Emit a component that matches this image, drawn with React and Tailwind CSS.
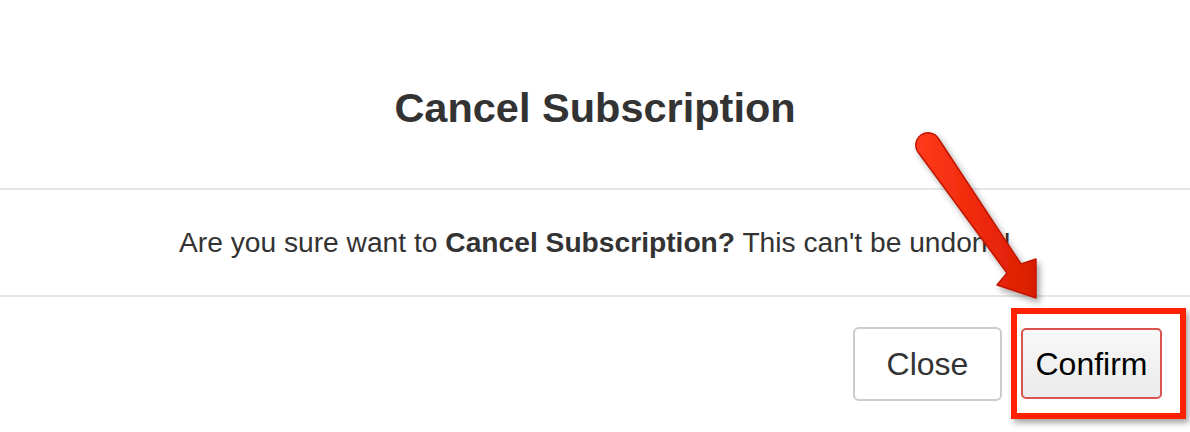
export default function App() {
  return (
    <div className="relative w-[1190px] h-[432px] overflow-hidden bg-white text-[#333] font-['Liberation_Sans',Arial,sans-serif]">
      <div className="h-[188px] pt-[28px] flex items-center justify-center">
        <h2 className="text-[41.5px] font-bold leading-none">Cancel Subscription</h2>
      </div>
      <div className="h-[2px] bg-[#e5e5e5]" />
      <div className="h-[105px] flex items-center justify-center">
        <p className="text-[28.2px] leading-none">
          Are you sure want to <b>Cancel Subscription?</b> This can't be undone!
        </p>
      </div>
      <div className="h-[2px] bg-[#e5e5e5]" />
      <div className="flex justify-end items-start gap-[19px] pt-[30px] pr-[28px]">
        <button className="w-[149px] h-[74px] rounded-[6px] border-2 border-[#cccccc] bg-white text-[32px] text-[#333]">
          Close
        </button>
        <button className="mt-[1px] w-[141px] h-[71px] rounded-[5px] border-2 border-[#d9534f] bg-gradient-to-b from-[#f8f8f8] to-[#ebebeb] text-[32px] text-black">
          Confirm
        </button>
      </div>

      {/* annotation: highlight box */}
      <div className="absolute left-[1011px] top-[308px] w-[175px] h-[111px] border-[6px] border-[#ff2200] shadow-[3px_4px_6px_rgba(0,0,0,0.35)] pointer-events-none" />

      {/* annotation: arrow */}
      <svg className="absolute inset-0 pointer-events-none" width="1190" height="432" viewBox="0 0 1190 432">
        <defs>
          <linearGradient id="arrowFill" x1="0" y1="0" x2="1" y2="0">
            <stop offset="0" stopColor="#ff3b1c" />
            <stop offset="0.5" stopColor="#f02a0c" />
            <stop offset="1" stopColor="#d81e02" />
          </linearGradient>
          <filter id="arrowShadow" x="-20%" y="-20%" width="140%" height="140%">
            <feDropShadow dx="3" dy="4" stdDeviation="3" floodColor="#000" floodOpacity="0.35" />
          </filter>
        </defs>
        <path
          d="M 938 138 L 1021 264 L 1036 259 L 1036 298 L 997 285 L 1007 273 L 918 152 A 12 12 0 0 1 938 138 Z"
          fill="url(#arrowFill)"
          stroke="#c01800"
          strokeWidth="1.5"
          strokeLinejoin="round"
          filter="url(#arrowShadow)"
        />
      </svg>
    </div>
  )
}
